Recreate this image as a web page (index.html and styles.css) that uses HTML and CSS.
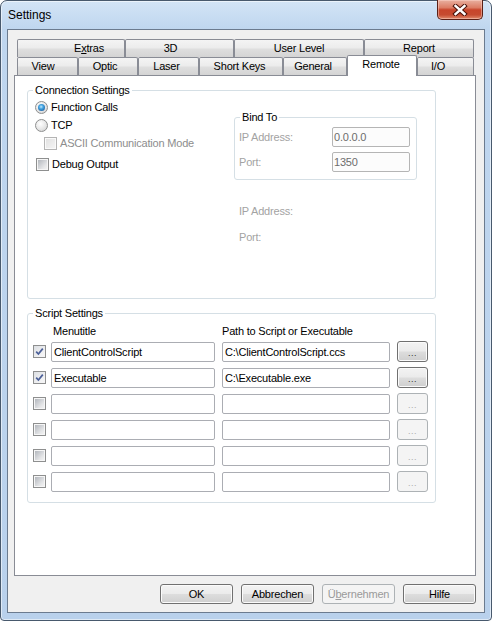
FILE: index.html
```html
<!DOCTYPE html>
<html>
<head>
<meta charset="utf-8">
<title>Settings</title>
<link rel="stylesheet" href="styles.css">
</head>
<body>
<div class="window">
  <div class="titlebar">
    <span class="title">Settings</span>
    <div class="close">
      <svg width="16" height="12" viewBox="0 0 16 12"><path d="M3.5 2 L12.5 10 M12.5 2 L3.5 10" stroke="#4a1209" stroke-width="4.4" stroke-linecap="square" fill="none"/><path d="M3.5 2 L12.5 10 M12.5 2 L3.5 10" stroke="#ffffff" stroke-width="2.4" stroke-linecap="square" fill="none"/></svg>
    </div>
  </div>
  <div class="client">
    <div class="tabctl">
      <div class="tabrow">
        <div class="tab t-extras">E<u>x</u>tras</div>
        <div class="tab t-3d">3D</div>
        <div class="tab t-user">User Level</div>
        <div class="tab t-report">Report</div>
      </div>
      <div class="tabrow">
        <div class="tab t-view">View</div>
        <div class="tab t-optic">Optic</div>
        <div class="tab t-laser">Laser</div>
        <div class="tab t-keys">Short Keys</div>
        <div class="tab t-general">General</div>
        <div class="tab sel t-remote">Remote</div>
        <div class="tab t-io">I/O</div>
      </div>
      <div class="panel">
        <div class="group conn">
          <span class="legend">Connection Settings</span>
          <div class="conn-left">
            <div class="opt"><span class="radio checked"></span><span>Function Calls</span></div>
            <div class="opt"><span class="radio"></span><span>TCP</span></div>
            <div class="opt sub disabled"><span class="cb dis"></span><span>ASCII Communication Mode</span></div>
            <div class="opt debug"><span class="cb"></span><span>Debug Output</span></div>
          </div>
          <div class="conn-right">
            <div class="group bind">
              <span class="legend">Bind To</span>
              <div class="field"><span class="lbl">IP Address:</span><span class="input dis small">0.0.0.0</span></div>
              <div class="field"><span class="lbl">Port:</span><span class="input dis small">1350</span></div>
            </div>
            <div class="info first"><span class="lbl">IP Address:</span></div>
            <div class="info"><span class="lbl">Port:</span></div>
          </div>
        </div>
        <div class="group script">
          <span class="legend">Script Settings</span>
          <div class="hdr"><span class="hdr-title">Menutitle</span><span>Path to Script or Executable</span></div>
          <div class="srow">
            <span class="cb checked"><svg width="9" height="9" viewBox="0 0 9 9"><path d="M1.2 4.6 L3.4 7 L7.8 1.6" stroke="#4b5f98" stroke-width="1.7" fill="none"/></svg></span>
            <span class="input name">ClientControlScript</span>
            <span class="input path">C:\ClientControlScript.ccs</span>
            <span class="btn dots">...</span>
          </div>
          <div class="srow">
            <span class="cb checked"><svg width="9" height="9" viewBox="0 0 9 9"><path d="M1.2 4.6 L3.4 7 L7.8 1.6" stroke="#4b5f98" stroke-width="1.7" fill="none"/></svg></span>
            <span class="input name">Executable</span>
            <span class="input path">C:\Executable.exe</span>
            <span class="btn dots">...</span>
          </div>
          <div class="srow">
            <span class="cb"></span>
            <span class="input name"></span>
            <span class="input path"></span>
            <span class="btn dots disabled">...</span>
          </div>
          <div class="srow">
            <span class="cb"></span>
            <span class="input name"></span>
            <span class="input path"></span>
            <span class="btn dots disabled">...</span>
          </div>
          <div class="srow">
            <span class="cb"></span>
            <span class="input name"></span>
            <span class="input path"></span>
            <span class="btn dots disabled">...</span>
          </div>
          <div class="srow">
            <span class="cb"></span>
            <span class="input name"></span>
            <span class="input path"></span>
            <span class="btn dots disabled">...</span>
          </div>
        </div>
      </div>
      <div class="buttons">
        <span class="btn main">OK</span>
        <span class="btn main">Abbrechen</span>
        <span class="btn main disabled">Ü<u>b</u>ernehmen</span>
        <span class="btn main">Hilfe</span>
      </div>
    </div>
  </div>
</div>
</body>
</html>
```

FILE: styles.css
```css
* { box-sizing: border-box; }

body {
  margin: 0;
  font-family: "Liberation Sans", Arial, sans-serif;
  font-size: 11px;
  letter-spacing: -0.2px;
  color: #000;
  background: #fff;
}

.window {
  width: 492px;
  height: 621px;
  border: 1px solid #48596d;
  border-radius: 7px 7px 4px 4px;
  background: linear-gradient(#d3e4f6 0, #bfd6ef 28px, #b9d1ec 100%);
  box-shadow: inset 0 0 0 1px rgba(255,255,255,0.55);
  display: flex;
  flex-direction: column;
}

.titlebar {
  height: 28px;
  flex: none;
  display: flex;
  align-items: flex-start;
  justify-content: space-between;
  padding: 0 8px 0 7px;
}

.title {
  font-size: 12px;
  letter-spacing: 0;
  line-height: 14px;
  margin-top: 7px;
}

.close {
  width: 46px;
  height: 20px;
  margin-top: -1px;
  border: 1px solid #5b2016;
  border-top: none;
  border-radius: 0 0 5px 5px;
  background: linear-gradient(#e9b0a0 0, #dc7d65 40%, #c8452b 52%, #c64b30 78%, #e08a6c 100%);
  box-shadow: inset 0 0 0 1px rgba(255,220,210,0.45);
  display: flex;
  align-items: center;
  justify-content: center;
}

.client {
  flex: none;
  height: 584px;
  margin: 0 6px;
  border: 1px solid #6b7b8f;
  background: #f0f0f0;
  padding: 9px 0 0 6px;
}

.tabctl { width: 462px; }

.tabrow {
  display: flex;
  height: 18px;
  padding-left: 3px;
}

.tab {
  flex: none;
  height: 18px;
  border: 1px solid #898c95;
  border-bottom: none;
  border-radius: 2px 2px 0 0;
  background: linear-gradient(#f4f4f4 0, #ececec 45%, #dedede 55%, #d4d4d4 100%);
  text-align: center;
  line-height: 17px;
  white-space: nowrap;
}

.tab.sel {
  height: 21px;
  margin-top: -2px;
  background: #fff;
  line-height: 16px;
  position: relative;
  z-index: 1;
}

.t-extras { width: 108px; padding-left: 36px; }
.t-3d { width: 109px; padding-right: 18px; }
.t-user { width: 130px; }
.t-report { width: 110px; }
.t-view { width: 61px; padding-right: 9px; }
.t-optic { width: 60px; padding-right: 6px; }
.t-laser { width: 61px; padding-right: 4px; }
.t-keys { width: 84px; padding-right: 3px; }
.t-general { width: 64px; padding-right: 4px; }
.t-remote { width: 70px; padding-right: 2px; }
.t-io { width: 57px; padding-right: 15px; }

.panel {
  height: 501px;
  border: 1px solid #898c95;
  background: #fff;
  padding: 14px 0 0 12px;
}

.group {
  position: relative;
  border: 1px solid #d5dfe5;
  border-radius: 3px;
}

.legend {
  position: absolute;
  top: -8px;
  left: 5px;
  padding: 0 2px;
  background: #fff;
  line-height: 14px;
  white-space: nowrap;
}

.conn {
  width: 409px;
  height: 209px;
  padding: 7px 0 0 7px;
  display: flex;
  align-items: flex-start;
}

.conn-left { width: 199px; flex: none; }

.opt {
  height: 18px;
  display: flex;
  align-items: center;
  gap: 3px;
  white-space: nowrap;
}

.opt.sub { padding-left: 9px; }
.opt.debug { margin-top: 3px; padding-left: 1px; }
.disabled { color: #8d8d8d; }

.conn-right {
  width: 183px;
  flex: none;
  margin-top: 19px;
}

.bind {
  height: 63px;
  padding: 9px 6px 0 4px;
}

.field {
  height: 20px;
  display: flex;
  align-items: center;
  justify-content: space-between;
}

.field + .field { margin-top: 5px; }

.lbl { color: #a3a3a3; }

.info {
  height: 20px;
  display: flex;
  align-items: center;
  padding-left: 5px;
  margin-top: 6px;
}

.info.first { margin-top: 21px; }

.script {
  width: 409px;
  height: 190px;
  margin-top: 14px;
  padding: 11px 0 0 5px;
}

.hdr {
  display: flex;
  height: 13px;
  line-height: 13px;
  margin-bottom: 3px;
  padding-left: 20px;
  white-space: nowrap;
}

.hdr-title { width: 169px; }

.srow {
  height: 21px;
  display: flex;
  align-items: center;
}

.srow + .srow { margin-top: 5px; }

.input {
  display: block;
  height: 20px;
  border: 1px solid #abadb3;
  border-radius: 2px;
  background: #fff;
  padding-left: 2px;
  line-height: 18px;
  white-space: nowrap;
  overflow: hidden;
  flex: none;
}

.input.name { width: 164px; margin-left: 5px; }
.input.path { width: 168px; margin-left: 7px; }
.input.small { width: 78px; padding-left: 1px; }
.input.dis { color: #6d6d6d; border-color: #b5b5b5; background: #fcfcfc; }

.radio {
  flex: none;
  width: 13px;
  height: 13px;
  border-radius: 50%;
  border: 1px solid #8e8f8f;
  background: radial-gradient(circle at 40% 35%, #ffffff 0, #e6e6e6 55%, #c9c9c9 100%);
  position: relative;
}

.radio.checked::after {
  content: "";
  position: absolute;
  left: 2px;
  top: 2px;
  width: 7px;
  height: 7px;
  border-radius: 50%;
  background: radial-gradient(circle at 45% 40%, #c4e8fb 0, #45a6e3 35%, #1b5b9d 85%);
}

.cb {
  flex: none;
  width: 13px;
  height: 13px;
  border: 1px solid #8e8f8f;
  padding: 1px;
  background: linear-gradient(135deg, #b3b7bd 0, #e4e5e7 70%, #f2f2f2 100%) content-box, #f6f6f6;
  display: flex;
  align-items: center;
  justify-content: center;
}

.cb.checked {
  background: linear-gradient(135deg, #dcdfe3 0, #f4f4f5 80%) content-box, #f8f8f8;
  padding: 0;
}

.cb.dis {
  border-color: #b4b4b4;
  background: linear-gradient(135deg, #e2e2e2 0, #f4f4f4 100%) content-box, #fafafa;
}

.btn {
  display: flex;
  align-items: center;
  justify-content: center;
  border: 1px solid #707070;
  border-radius: 3px;
  background: linear-gradient(#f3f3f3 0, #ebebeb 48%, #dddddd 52%, #cfcfcf 100%);
  box-shadow: inset 0 0 0 1px #fbfbfb;
  white-space: nowrap;
  flex: none;
}

.btn.disabled {
  border-color: #adb2b5;
  background: #f4f4f4;
  box-shadow: none;
  color: #9a9a9a;
}

.dots {
  width: 31px;
  height: 21px;
  margin-left: 7px;
  font-size: 9px;
  letter-spacing: 0.5px;
  padding-top: 3px;
  color: #333;
}

.dots.disabled { color: #aaaaaa; }

.buttons {
  display: flex;
  justify-content: flex-end;
  gap: 8px;
  margin-top: 8px;
}

.btn.main {
  width: 73px;
  height: 20px;
}
```
